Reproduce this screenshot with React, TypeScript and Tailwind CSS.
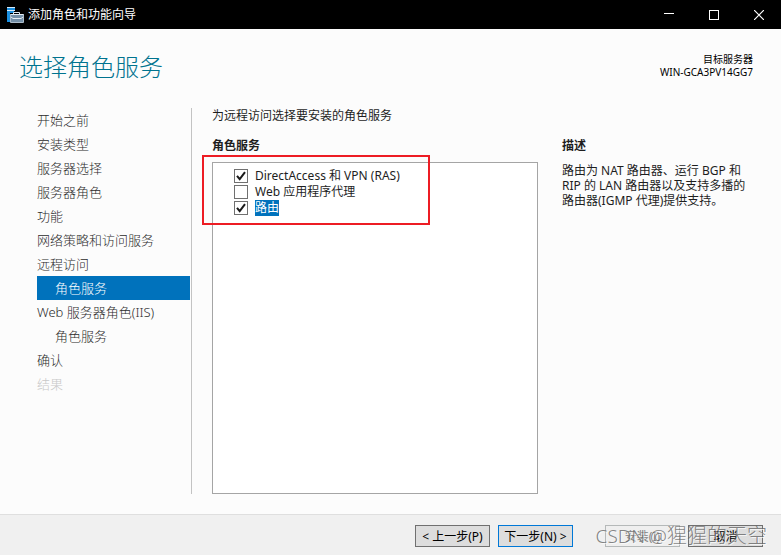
import React, { useState } from 'react';

type Step = { label: string; nested?: boolean; active?: boolean; disabled?: boolean };

const steps: Step[] = [
  { label: '开始之前' },
  { label: '安装类型' },
  { label: '服务器选择' },
  { label: '服务器角色' },
  { label: '功能' },
  { label: '网络策略和访问服务' },
  { label: '远程访问' },
  { label: '角色服务', nested: true, active: true },
  { label: 'Web 服务器角色(IIS)' },
  { label: '角色服务', nested: true },
  { label: '确认' },
  { label: '结果', disabled: true },
];

const services = [
  { id: 'ras', label: 'DirectAccess 和 VPN (RAS)', checked: true },
  { id: 'proxy', label: 'Web 应用程序代理', checked: false },
  { id: 'routing', label: '路由', checked: true },
];

const ServerIcon: React.FC = () => (
  <svg width="18" height="18" viewBox="0 0 18 18" className="shrink-0" aria-hidden="true">
    <rect x="0" y="1" width="8" height="15" fill="#1b8fe0" />
    <path d="M0 1.5h8M0 4.5h8" stroke="#d8ecfa" />
    <path d="M3 7h4V5h8v2h2v10H3z" fill="#000" />
    <path d="M6.5 9V6.5h6V9" fill="none" stroke="#dfe8f0" />
    <rect x="4" y="8" width="12" height="8" fill="#7590a8" />
    <path d="M4 8.5h12M4 11l2 1.5h8L16 11" fill="none" stroke="#e6edf3" />
    <path d="M3.5 8v8.5h13V8" fill="none" stroke="#aebdca" />
  </svg>
);

const TitleBar: React.FC = () => (
  <header className="flex h-[29px] items-center bg-black pl-[7px] text-white">
    <ServerIcon />
    <h1 className="ml-[3px] flex-1 text-[12px] leading-4">添加角色和功能向导</h1>
    <button type="button" aria-label="最小化" className="flex h-[29px] w-[45px] items-center justify-center">
      <svg width="10" height="10" viewBox="0 0 10 10"><path d="M0 3.5h10" stroke="currentColor" /></svg>
    </button>
    <button type="button" aria-label="最大化" className="flex h-[29px] w-[45px] items-center justify-center">
      <svg width="10" height="10" viewBox="0 0 10 10"><rect x="0.5" y="0.5" width="9" height="9" fill="none" stroke="currentColor" /></svg>
    </button>
    <button type="button" aria-label="关闭" className="flex h-[29px] w-[45px] items-center justify-center">
      <svg width="10" height="10" viewBox="0 0 10 10"><path d="M0 0l10 10M10 0L0 10" stroke="currentColor" strokeWidth="1.2" /></svg>
    </button>
  </header>
);

const Sidebar: React.FC = () => (
  <nav className="w-[155px] shrink-0 border-r border-[#c3c3c3] pr-px text-[13px] font-light">
    {steps.map((step, i) => (
      <a
        key={i}
        href="#"
        onClick={(e) => e.preventDefault()}
        aria-current={step.active ? 'step' : undefined}
        aria-disabled={step.disabled}
        className={`block h-6 whitespace-nowrap leading-6 ${step.nested ? 'pl-[18px]' : ''} ${
          step.active ? 'bg-[#0072bc] text-white' : step.disabled ? 'text-[#c8c8c8]' : 'text-[#2b2b2b]'
        }`}
      >
        {step.label}
      </a>
    ))}
  </nav>
);

const ServiceList: React.FC = () => {
  const [checked, setChecked] = useState<Record<string, boolean>>(
    Object.fromEntries(services.map((s) => [s.id, s.checked]))
  );

  return (
    <div className="relative flex-1 border border-[#a5a5a5] bg-white pl-[21px] pt-[5px]">
      {services.map((s) => (
        <div key={s.id} className="flex h-4 items-center">
          <span className="relative flex">
            <input
              id={s.id}
              type="checkbox"
              checked={checked[s.id]}
              onChange={() => setChecked({ ...checked, [s.id]: !checked[s.id] })}
              className="h-[14px] w-[14px] appearance-none border border-[#707070] bg-white"
            />
            {checked[s.id] && (
              <svg width="14" height="14" viewBox="0 0 14 14" className="pointer-events-none absolute inset-0">
                <path d="M3 6.8l2.7 3.4L11 3.2" fill="none" stroke="#1a1a1a" strokeWidth="2" />
              </svg>
            )}
          </span>
          <label htmlFor={s.id} className={`ml-[7px] leading-4 ${s.id === 'routing' ? 'bg-[#0072bc] text-white' : ''}`}>
            {s.label}
          </label>
        </div>
      ))}
      <div className="pointer-events-none absolute -left-[11px] -top-2 h-[70px] w-[228px] border-2 border-[#ed1c24]" />
    </div>
  );
};

const buttonBase = 'h-[22px] w-[75px] whitespace-nowrap border pt-px text-center text-[12px] leading-5';

const Footer: React.FC = () => (
  <footer className="relative flex h-[41px] justify-end border-t border-[#dfdfdf] bg-[#f0f0f0] pr-[18px] pt-[10px]">
    <button type="button" className={`${buttonBase} border-[#707070] bg-[#dddddd] text-black`}>&lt; 上一步(P)</button>
    <button type="button" className={`${buttonBase} ml-2 border-[#0078d7] bg-[#dddddd] text-black`}>下一步(N) &gt;</button>
    <button type="button" disabled className={`${buttonBase} ml-8 border-[#b5b9b9] bg-[#efefef] text-[#838383]`}>安装(I)</button>
    <button type="button" className={`${buttonBase} ml-2 border-[#707070] bg-[#dddddd] text-black`}>取消</button>
    <p className="pointer-events-none absolute right-[14px] top-[7px] whitespace-nowrap text-[20px] font-light leading-7 text-[#666666]/80 [text-shadow:1px_1px_0_#ffffffb0]">
      <span className="text-[19px]">CSDN @</span>猩猩的天空
    </p>
  </footer>
);

export default function App() {
  return (
    <div className="flex min-h-screen flex-col bg-[#fcfcfc] font-['Noto_Sans','Noto_Sans_CJK_SC',sans-serif] text-[12px] text-[#1e1e1e]">
      <TitleBar />
      <div className="flex h-[79px] items-start justify-between pl-[19px] pr-7 pt-6">
        <h2 className="text-[24px] font-light leading-7 text-[#00738f]">选择角色服务</h2>
        <div className="text-right text-[10px] leading-[13px] text-black">
          <p>目标服务器</p>
          <p>WIN-GCA3PV14GG7</p>
        </div>
      </div>
      <main className="flex flex-1 pb-5 pl-[37px] pr-[31px]">
        <Sidebar />
        <section className="ml-5 flex flex-1 flex-col">
          <p className="leading-4">为远程访问选择要安装的角色服务</p>
          <h3 className="mb-2 mt-[14px] font-bold leading-4">角色服务</h3>
          <ServiceList />
        </section>
        <aside className="ml-6 w-[188px] shrink-0 pt-[30px]">
          <h3 className="font-bold leading-4">描述</h3>
          <p className="mt-[9px] leading-[15px]">路由为 NAT 路由器、运行 BGP 和 RIP 的 LAN 路由器以及支持多播的路由器(IGMP 代理)提供支持。</p>
        </aside>
      </main>
      <Footer />
    </div>
  );
}
